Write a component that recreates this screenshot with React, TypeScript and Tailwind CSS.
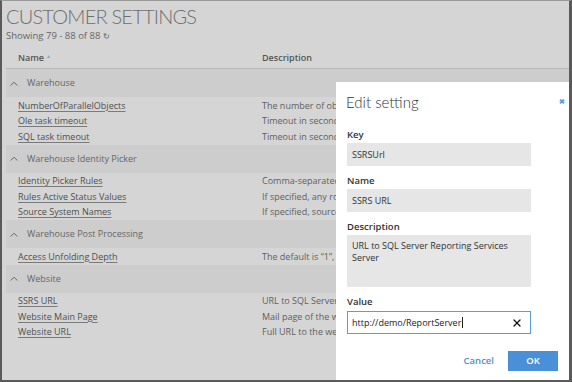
import { X } from "lucide-react";

type Group = {
  title: string;
  items: { name: string; description: string }[];
};

const groups: Group[] = [
  {
    title: "Warehouse",
    items: [
      { name: "NumberOfParallelObjects", description: "The number of objects processed in parallel" },
      { name: "Ole task timeout", description: "Timeout in seconds for OLE tasks" },
      { name: "SQL task timeout", description: "Timeout in seconds for SQL tasks" },
    ],
  },
  {
    title: "Warehouse Identity Picker",
    items: [
      { name: "Identity Picker Rules", description: "Comma-separated list of rules" },
      { name: "Rules Active Status Values", description: "If specified, any rows with status" },
      { name: "Source System Names", description: "If specified, source systems" },
    ],
  },
  {
    title: "Warehouse Post Processing",
    items: [{ name: "Access Unfolding Depth", description: "The default is “1”, meaning" }],
  },
  {
    title: "Website",
    items: [
      { name: "SSRS URL", description: "URL to SQL Server Reporting Services Server" },
      { name: "Website Main Page", description: "Mail page of the website" },
      { name: "Website URL", description: "Full URL to the website" },
    ],
  },
];

const Chevron = () => (
  <svg width="8" height="5" viewBox="0 0 8 5" className="mr-[9px]">
    <path d="M0.7 4.5 L4 1.2 L7.3 4.5" fill="none" stroke="#666" strokeWidth="1" />
  </svg>
);

const SettingsTable = () => (
  <div className="mt-[4px]">
    <div className="flex h-[22px] items-center border-b border-[#b8b8b8] text-[9px] font-semibold text-[#555]">
      <div className="flex w-[256px] items-center pl-[12px]">
        Name
        <span className="ml-[2px] -translate-y-[1px] text-[5px] text-[#7aaedb]">▲</span>
      </div>
      <div>Description</div>
    </div>
    {groups.map((group) => (
      <div key={group.title}>
        <div className="flex h-[28px] items-center bg-[#cdcdcd] pl-[4px] text-[9px] text-[#666]">
          <Chevron />
          {group.title}
        </div>
        <div className="py-[0.5px]">
          {group.items.map((item) => (
            <div key={item.name} className="flex h-[15.5px] items-center text-[9px] text-[#4f4f4f]">
              <div className="w-[256px] pl-[12px] underline decoration-[#7a7a7a] underline-offset-[1.5px]">
                {item.name}
              </div>
              <div className="whitespace-nowrap text-[#606060]">{item.description}</div>
            </div>
          ))}
        </div>
      </div>
    ))}
  </div>
);

const Label = ({ children, gap = "mb-[2px]" }: { children: string; gap?: string }) => (
  <div className={`${gap} text-[9.5px] font-semibold leading-[12px] text-[#333]`}>{children}</div>
);

const Field = ({ label, value }: { label: string; value: string }) => (
  <div className="mb-[9px]">
    <Label>{label}</Label>
    <div className="flex h-[23px] w-[184px] items-center bg-[#e6e6e6] px-[5px] text-[9px] text-[#333]">
      {value}
    </div>
  </div>
);

const EditDialog = () => (
  <div className="absolute left-[334px] top-[81px] h-[298px] w-[233px] bg-white px-[11px] pt-[10px]">
    <div className="-mr-[7px] flex h-[20px] items-center justify-between">
      <h2 className="-ml-[1px] font-['Lato'] text-[15px] font-light leading-[20px] text-[#333]">Edit setting</h2>
      <span className="text-[7px] font-bold text-[#5b9bd5]">✖</span>
    </div>
    <div className="mt-[17px]">
      <Field label="Key" value="SSRSUrl" />
      <Field label="Name" value="SSRS URL" />
      <div className="mb-[9px]">
        <Label>Description</Label>
        <div className="h-[52px] w-[184px] bg-[#e6e6e6] px-[5px] pt-[5px] text-[9px] leading-[12px] text-[#333]">
          URL to SQL Server Reporting Services Server
        </div>
      </div>
      <div>
        <Label gap="mb-[3px]">Value</Label>
        <div className="flex h-[23px] w-[184px] items-center justify-between border border-[#5aa0d8] pl-[4px] pr-[7px] text-[9px] text-[#222]">
          <span className="flex items-center">
            http://demo/ReportServer<span className="ml-[1px] inline-block h-[11px] w-px bg-[#222]" />
          </span>
          <X size={12} strokeWidth={2.6} color="#111" />
        </div>
      </div>
      <div className="mt-[17px] flex items-center justify-end gap-[14px]">
        <span className="text-[9.5px] font-semibold text-[#4a90d9]">Cancel</span>
        <button className="h-[20px] w-[50px] bg-[#4a90d9] text-[9.5px] font-semibold text-white">OK</button>
      </div>
    </div>
  </div>
);

export default function App() {
  return (
    <div className="relative h-[382px] w-[572px] overflow-hidden border-t border-r-[3px] border-b-2 border-l-2 border-[#5a5a5a] border-t-[#9a9a9a] bg-[#d5d5d5] pl-[4px] font-['Open_Sans',sans-serif]">
      <h1 className="mt-[3px] font-['Lato'] text-[20px] font-light leading-[24px] tracking-[-0.8px] text-[#6e6e6e]">
        CUSTOMER SETTINGS
      </h1>
      <div className="mt-[1px] flex h-[14px] items-center text-[9.5px] text-[#666]">
        Showing 79 - 88 of 88
        <span className="ml-[3px] text-[8px]">↻</span>
      </div>
      <SettingsTable />
      <EditDialog />
    </div>
  );
}
